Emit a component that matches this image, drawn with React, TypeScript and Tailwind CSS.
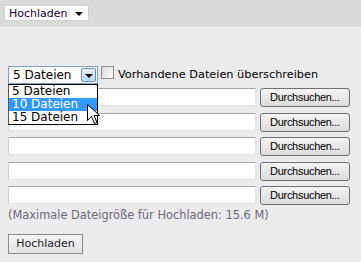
import React from 'react'

const sans = { fontFamily: '"DejaVu Sans", Verdana, sans-serif' }

function BrowseRow() {
  return (
    <div className="flex h-[19px] items-start">
      <div className="h-[18px] w-[248px] border border-[#e3e3e3] border-t-[#a9a9a9] border-l-[#d0d0d0] bg-white" />
      <button
        className="ml-[4px] flex h-[19px] w-[90px] items-center justify-center rounded-[3px] border border-[#707070] bg-gradient-to-b from-[#f4f4f4] to-[#dcdcdc] text-[11px] tracking-[-0.3px] text-black"
        style={{ fontFamily: '"Liberation Sans", Arial, sans-serif' }}
      >
        Durchsuchen...
      </button>
    </div>
  )
}

function Cursor() {
  return (
    <svg className="absolute left-[78px] top-[19px]" width="13" height="20" viewBox="0 0 13 20">
      <path d="M0.5 0.5 L0.5 16.5 L4.5 12.5 L7.5 19.5 L10 18.5 L7 11.5 L12.5 11.5 Z" fill="#fff" stroke="#000" strokeWidth="1" strokeLinejoin="miter" />
    </svg>
  )
}

export default function App() {
  return (
    <div className="h-[262px] w-[361px] overflow-hidden bg-[#ebebeb] text-black" style={sans}>
      {/* kopfzeile */}
      <div className="h-[27px] bg-[#dadada] pl-[4px] pt-[5px]">
        <div className="flex h-[16px] w-[85px] items-center justify-between rounded-[2px] border border-[#d0d0d0] bg-white pl-[4px] pr-[5px] text-[11px] leading-none text-[#1a0033]">
          <span>Hochladen</span>
          <span className="mt-[2px] h-0 w-0 border-x-[4px] border-t-[4px] border-x-transparent border-t-black" />
        </div>
      </div>

      <div className="px-[8px] pt-[39px]">
        {/* anzahl + checkbox */}
        <div className="relative flex h-[18px] items-start">
          <div className="flex h-[18px] w-[90px] items-stretch border border-[#7f9db9] bg-white">
            <span className="flex-1 pl-[4px] text-[12px] leading-[16px]">5 Dateien</span>
            <span className="m-[1px] flex w-[15px] items-center justify-center rounded-[2px] border border-[#6f8fb3] bg-gradient-to-b from-[#e9f3fd] to-[#bcd6f0]">
              <span className="mt-[2px] h-0 w-0 border-x-[4px] border-t-[4px] border-x-transparent border-t-black" />
            </span>
          </div>
          <div className="ml-[3px] h-[13px] w-[13px] border border-[#8f8f8f] bg-gradient-to-br from-[#dcdcdc] to-[#fbfbfb]" />
          <span className="ml-[4px] mt-[2px] text-[11.3px] leading-[14px]">Vorhandene Dateien überschreiben</span>

          {/* aufgeklappte liste */}
          <div className="absolute left-0 top-[18px] z-10 w-[90px] border border-black border-l-[#555] bg-white text-[12px] leading-[13px]">
            <div className="pl-[3px]">5 Dateien</div>
            <div className="bg-[#3399ff] pl-[3px] text-white">10 Dateien</div>
            <div className="pl-[3px]">15 Dateien</div>
            <Cursor />
          </div>
        </div>

        {/* dateifelder */}
        <div className="mt-[4px] flex flex-col gap-[5.5px]">
          <BrowseRow />
          <BrowseRow />
          <BrowseRow />
          <BrowseRow />
          <BrowseRow />
        </div>

        <p className="mt-[3px] text-[11.4px] leading-[14px] text-[#6e6a78]">(Maximale Dateigröße für Hochladen: 15.6 M)</p>

        <button className="mt-[12px] flex h-[20px] w-[75px] items-center justify-center border border-[#8a8a8a] bg-gradient-to-b from-[#f6f6f6] to-[#e2e2e2] text-[11px] text-[#1a1a2a]">
          Hochladen
        </button>
      </div>
    </div>
  )
}
